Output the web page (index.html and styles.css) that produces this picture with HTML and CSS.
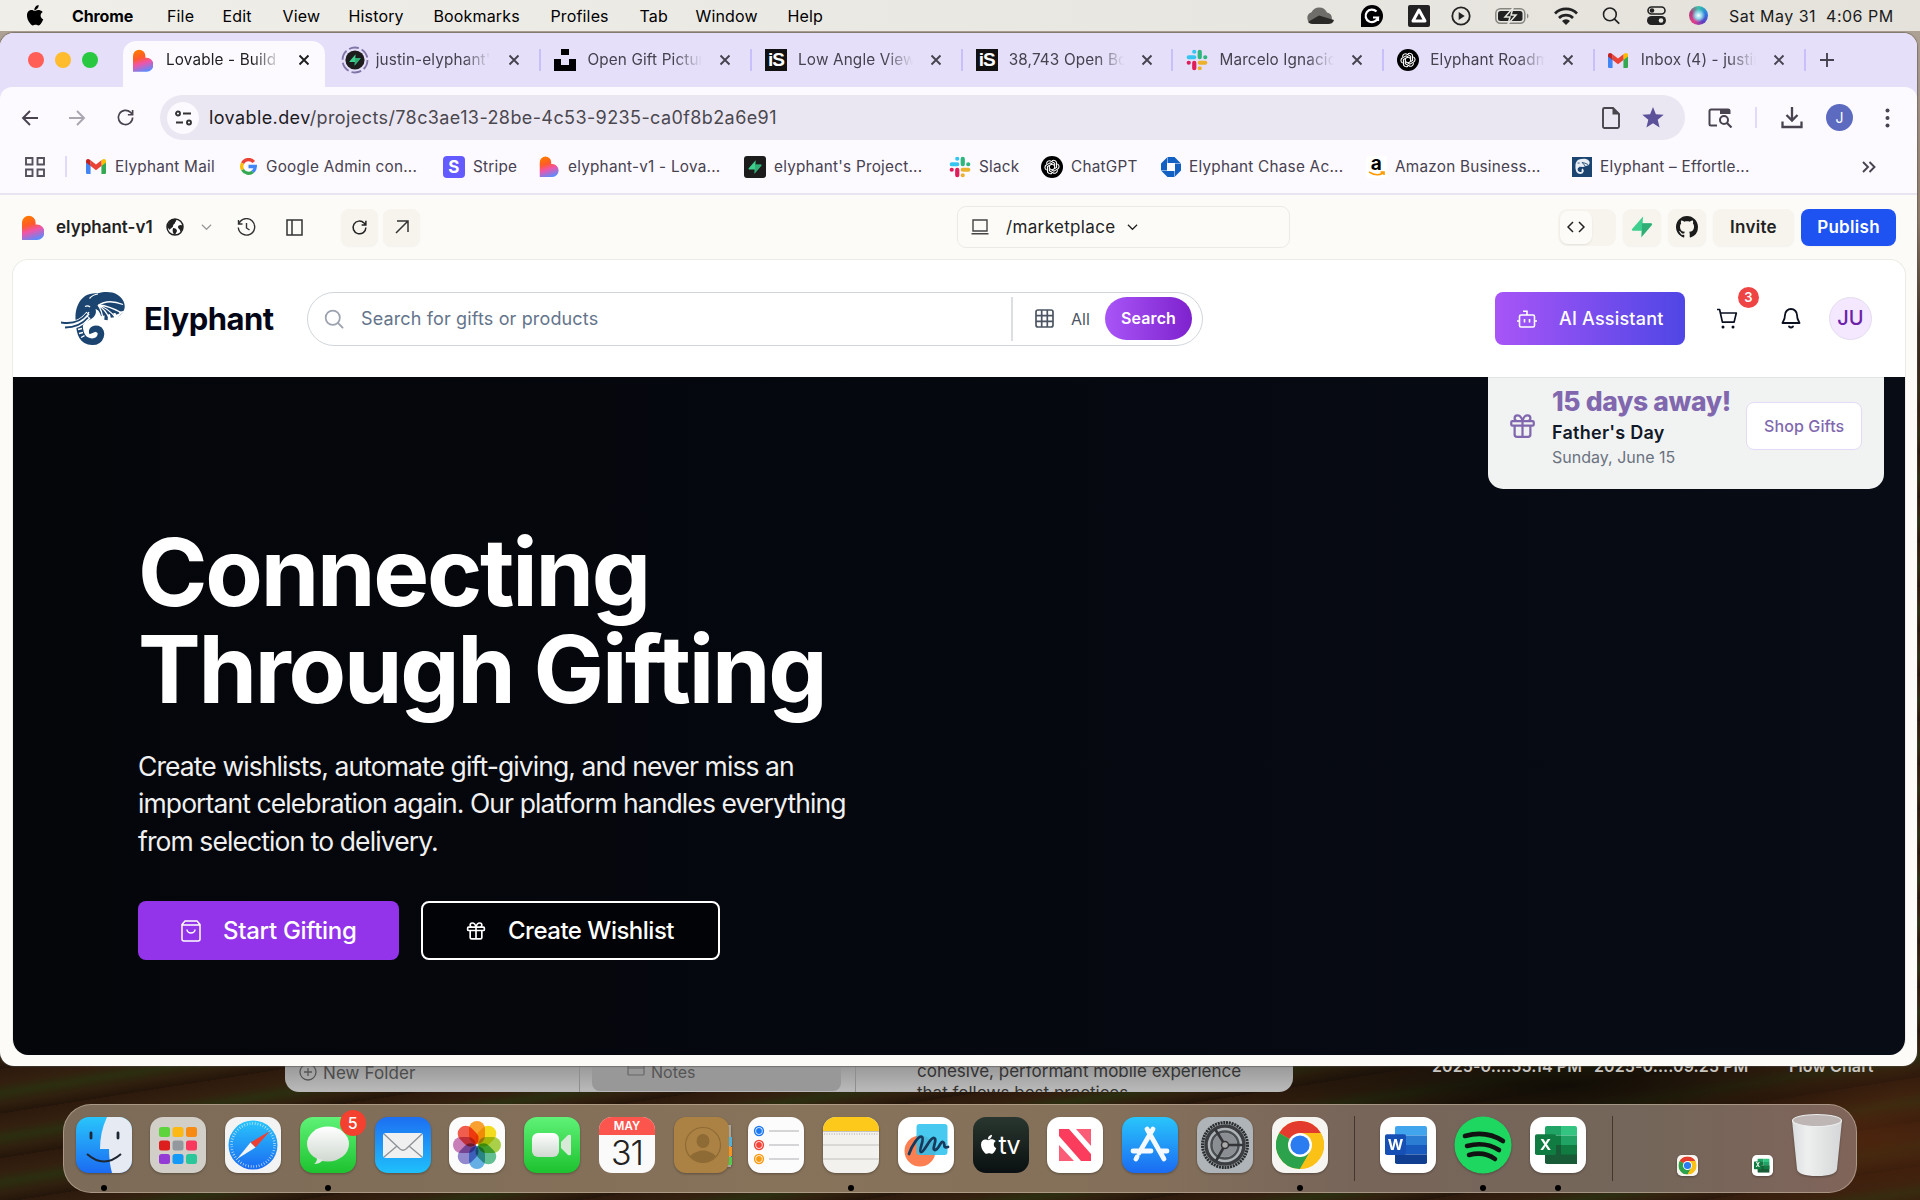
FILE: index.html
```html
<!DOCTYPE html>
<html lang="en">
<head>
<meta charset="utf-8">
<title>Elyphant – Marketplace</title>
<link rel="stylesheet" href="styles.css">
</head>
<body>
<svg class="defs" width="0" height="0" aria-hidden="true">
  <defs>
    <linearGradient id="gLov" x1=".3" y1="0" x2=".6" y2="1"><stop offset="0" stop-color="#ff7a00"/><stop offset=".35" stop-color="#ff5a2a"/><stop offset=".6" stop-color="#f055a8"/><stop offset="1" stop-color="#5a8bff"/></linearGradient>
    <linearGradient id="gBlue" x1="0" y1="0" x2="0" y2="1"><stop offset="0" stop-color="#29c5fb"/><stop offset="1" stop-color="#1b6bf2"/></linearGradient>
    <linearGradient id="gMail" x1="0" y1="0" x2="0" y2="1"><stop offset="0" stop-color="#1d6ff2"/><stop offset="1" stop-color="#1fc0fb"/></linearGradient>
    <linearGradient id="gGreen" x1="0" y1="0" x2="0" y2="1"><stop offset="0" stop-color="#5ff277"/><stop offset="1" stop-color="#1dc22f"/></linearGradient>
    <linearGradient id="gWhite" x1="0" y1="0" x2="0" y2="1"><stop offset="0" stop-color="#fff"/><stop offset="1" stop-color="#cfd8d0"/></linearGradient>
    <linearGradient id="gTrash" x1="0" y1="0" x2="1" y2="0"><stop offset="0" stop-color="#d9dcdd"/><stop offset=".3" stop-color="#eef0f0"/><stop offset="1" stop-color="#d4d6d7"/></linearGradient>
    <symbol id="lovable" viewBox="0 0 22 25"><path d="M0 25V7.500a6.800 6.800 0 0 1 13.600 0V9.500H15a7.400 7.700 0 0 1 0 15.500Z" fill="url(#gLov)"/></symbol>
    <symbol id="gmail" viewBox="0 0 24 18"><path d="M0 2v14.500A1.500 1.500 0 0 0 1.500 18H5.500V7Z" fill="#4285f4"/><path d="M18.500 7v11h4a1.500 1.500 0 0 0 1.500-1.500V2Z" fill="#34a853"/><path d="M18.500 1.600V8.500L24 4.300V2.400C24 .2 21.500-.7 19.800.6Z" fill="#fbbc04"/><path d="M5.500 8.500V1.600L12 6.500 18.500 1.600V8.500L12 13.400Z" fill="#ea4335"/><path d="M0 2.400v1.900l5.500 4.200V1.600L4.200.6C2.500-.7 0 .2 0 2.400Z" fill="#c5221f"/></symbol>
    <symbol id="slack" viewBox="0 0 24 24"><g stroke-width="4.600" stroke-linecap="round"><path d="M9 3v0M9 9H3" stroke="#36c5f0"/><path d="M21 9v0M15 3v6" stroke="#2eb67d"/><path d="M15 21v0M15 15h6" stroke="#ecb22e"/><path d="M3 15v0M9 15v6" stroke="#e01e5a"/></g></symbol>
    <symbol id="gpt" viewBox="0 0 24 24"><circle cx="12" cy="12" r="12" fill="#000"/><g fill="none" stroke="#fff" stroke-width="1.200"><path id="pet" d="M12 5.200a3.200 3.200 0 0 1 5 2.800v4.500L12 15.300"/><use href="#pet" transform="rotate(60 12 12)"/><use href="#pet" transform="rotate(120 12 12)"/><use href="#pet" transform="rotate(180 12 12)"/><use href="#pet" transform="rotate(240 12 12)"/><use href="#pet" transform="rotate(300 12 12)"/></g></symbol>
    <symbol id="bolt" viewBox="0 0 24 24"><path d="M13.200.6 1.200 14.300c-.7.9-.1 1.900 1 1.900H12Z" fill="#3ecf8e"/><path d="M11 23.400 22.800 9.700c.7-.9.100-1.900-1-1.900H12Z" fill="#3ecf8e"/><path d="M12 16.200v6.200l10.600-12.700c.6-.9.100-1.900-1-1.900H12Z" fill="#249361" opacity=".55"/></symbol>
    <symbol id="close" viewBox="0 0 12 12"><path d="m1.500 1.500 9 9m0-9-9 9" stroke="currentColor" stroke-width="1.900" fill="none"/></symbol>
    <symbol id="chev" viewBox="0 0 12 8"><path d="m1 1.500 5 5 5-5" stroke="currentColor" stroke-width="1.300" fill="none"/></symbol>
    <symbol id="reload" viewBox="0 0 24 24"><path d="M21 12a9 9 0 1 1-2.600-6.400L21 8.200M21 2.500v6h-6" fill="none" stroke="currentColor" stroke-width="2.100"/></symbol>
    <symbol id="lens" viewBox="0 0 24 24"><circle cx="10.500" cy="10.500" r="8.500" fill="none" stroke="currentColor" stroke-width="2.100"/><path d="m16.700 16.700 5.600 5.600" stroke="currentColor" stroke-width="2.300" stroke-linecap="round"/></symbol>
    <symbol id="gift" viewBox="0 0 24 24"><path d="M3 8h18a1 1 0 0 1 1 1v2a1 1 0 0 1-1 1H3a1 1 0 0 1-1-1V9a1 1 0 0 1 1-1ZM12 8v14M19 12v8a2 2 0 0 1-2 2H7a2 2 0 0 1-2-2v-8M7.500 8a2.500 2.500 0 0 1 0-5C11 3 12 8 12 8s1-5 4.500-5a2.500 2.500 0 0 1 0 5" fill="none" stroke="currentColor" stroke-width="2" stroke-linejoin="round"/></symbol>
    <symbol id="apple" viewBox="0 0 18 22"><path d="M12.300 0c.2 1.400-.4 2.700-1.200 3.700-.8 1-2 1.700-3.300 1.600-.2-1.300.5-2.700 1.200-3.500C9.800.800 11.200.100 12.300 0ZM16.600 7.400c-1.400.8-2.200 2-2.200 3.700 0 1.900 1.100 3.400 2.800 4-.5 1.600-1.400 3.200-2.500 4.600-.7.900-1.500 1.800-2.700 1.800-1.100 0-1.500-.7-2.900-.7s-1.900.7-2.900.7c-1.200 0-2-.9-2.800-2C1 16.700 0 13.600 0 11 0 7.200 2.500 5.300 4.900 5.300c1.300 0 2.400.8 3.200.8.800 0 2-.9 3.600-.9 1.700 0 3.600.6 4.900 2.200Z" fill="currentColor"/></symbol>
    <symbol id="chrome" viewBox="0 0 48 48"><circle cx="24" cy="24" r="24" fill="#fbc116"/><path d="M24 24 3.200 12A24 24 0 0 1 44.800 12Z" fill="#e33b2e"/><path d="M24 24 3.200 12A24 24 0 0 0 24 48l10.400-18Z" fill="#2da24c"/><path d="M24 12h20.800A24 24 0 0 1 24 48l10.400-18Z" fill="#fbc116"/><circle cx="24" cy="24" r="12" fill="#fff"/><circle cx="24" cy="24" r="9.600" fill="#2a7cf0"/></symbol>
    <symbol id="elephant" viewBox="0 0 64 54">
      <path d="M14.500 27C14 18 17 9 24 4 28 1.300 33 .8 37 1.300 43-.5 51-.5 56 2.500c6 3.500 8.500 9 7.500 14-.6 3-3 6-6.500 8.200L41 28.500C40 22 38 18 34.500 17c1.500 4-1 8.500-5.500 10.500-3 1.500-7 5-8 7h-5Z" fill="#1b4470"/>
      <path d="M64 18.500 57 25 41 30.500l-2-6Z" fill="#fff"/>
      <path d="M43 14q3 6 2 14M44.500 13q6 5 7 12.500M46 12q8 4 11 10" fill="none" stroke="#1b4470" stroke-width="3.400"/>
      <path d="M37 13.500Q47 6.500 62 12.500M38 13q10 1 22 7.500M37 13q10 3 17.500 12.500M37 13q8 5 11.500 14M37 13q4 5 5 15" fill="none" stroke="#fff" stroke-width="1.300"/>
      <path d="M37 2q-5 .5-8.500 4.500M24 14.500q3-1.500 5 .5M21 25q5-1 7-5" fill="none" stroke="#fff" stroke-width="1.200"/>
      <path d="M18.500 30C18 42 22 49.500 31 49.700c9 .200 12-10.500 5.500-12.700-4-1-6 1.500-5 4" fill="none" stroke="#1b4470" stroke-width="6.600"/>
      <path d="M0 31c12 1.500 20-1 27-10M4 36c10-.5 17-3 24-11" fill="none" stroke="#fff" stroke-width="4.200"/>
      <path d="M0 30.500c12 2 20-1 26-9M4 35.500c10 0 17-3 23-10" fill="none" stroke="#1b4470" stroke-width="1.900"/>
      <path d="m17 37.500 4-1M18 41.500l4-1M20 45.500l3.500-1.800" stroke="#fff" stroke-width="1.300"/>
    </symbol>
    <symbol id="word" viewBox="0 0 42 46" preserveAspectRatio="none"><path d="M12 0h28a2 2 0 0 1 2 2v9.500H10V2a2 2 0 0 1 2-2Z" fill="#41a5ee"/><path d="M10 11.500h32V23H10z" fill="#2b7cd3"/><path d="M10 23h32v11.500H10z" fill="#185abd"/><path d="M10 34.500h32V44a2 2 0 0 1-2 2H12a2 2 0 0 1-2-2Z" fill="#103f91"/><rect y="10" width="21" height="25" rx="2" fill="#1650b5"/></symbol>
    <symbol id="excel" viewBox="0 0 42 46" preserveAspectRatio="none"><path d="M12 0h14v11.500H10V2a2 2 0 0 1 2-2Z" fill="#21a366"/><path d="M26 0h14a2 2 0 0 1 2 2v9.500H26z" fill="#33c481"/><path d="M10 11.500h16V23H10z" fill="#107c41"/><path d="M26 11.500h16V23H26z" fill="#21a366"/><path d="M10 23h32v23H12a2 2 0 0 1-2-2z" fill="#185c37"/><path d="M26 23h16v11.500H26z" fill="#107c41"/><rect y="10" width="21" height="25" rx="2" fill="#107c41"/></symbol>
  </defs>
</svg>

<header class="menubar">
  <svg width="17" height="21"><use href="#apple"/></svg>
  <b>Chrome</b><span>File</span><span>Edit</span><span>View</span><span>History</span><span>Bookmarks</span><span>Profiles</span><span>Tab</span><span>Window</span><span>Help</span>
  <div class="status">
    <svg width="28" height="18" viewBox="0 0 28 18"><path d="M7 17a6 6 0 0 1-1.500-11.700A8.500 8.500 0 0 1 21 5.500 6 6 0 0 1 22 17Z" fill="#6f6d69"/><path d="M2 15 13 8.500 28 13c-1 3-3 4-6 4H7c-2 0-4-1-5-2Z" fill="#2b2a28"/></svg>
    <svg width="22" height="22" viewBox="0 0 22 22"><path d="M0 22V11a11 11 0 1 1 11 11Z" fill="#000"/><path d="M15.500 6.500a6.300 6.300 0 1 0 1.500 6h-5M17 12v4" fill="none" stroke="#fff" stroke-width="2.200"/></svg>
    <svg width="22" height="22" viewBox="0 0 22 22"><rect width="22" height="22" rx="2" fill="#222"/><path d="m11 5 6 11H5Z" fill="none" stroke="#fff" stroke-width="3" stroke-linejoin="round"/></svg>
    <svg width="20" height="20" viewBox="0 0 20 20"><circle cx="10" cy="10" r="8.700" fill="none" stroke="#222" stroke-width="1.800"/><path d="m7.700 6 6 4-6 4Z" fill="#222"/></svg>
    <svg width="34" height="18" viewBox="0 0 34 18"><rect x=".8" y="1.800" width="29" height="14.500" rx="4.500" fill="none" stroke="#888680" stroke-width="1.500"/><rect x="3" y="4" width="24.500" height="10" rx="2.500" fill="#222"/><path d="M32 6.500c2 1 2 4 0 5" fill="#888680"/><path d="m18 1-8 9h5l-2 7 8-9h-5Z" fill="#222" stroke="#e8e7e1" stroke-width="1.500"/></svg>
    <svg width="24" height="18" viewBox="0 0 24 18"><g fill="none" stroke="#222" stroke-width="2.700"><path d="M1 6.500a15.500 15.500 0 0 1 22 0"/><path d="M5 11a10 10 0 0 1 14 0"/></g><path d="M8 14a5.500 5.500 0 0 1 8 0l-4 4Z" fill="#222"/></svg>
    <svg class="dark" width="18" height="19"><use href="#lens"/></svg>
    <svg width="19" height="19" viewBox="0 0 19 19"><rect x="1" y="1" width="17" height="7" rx="3.500" fill="none" stroke="#222" stroke-width="1.600"/><circle cx="5" cy="4.500" r="2.300" fill="#222"/><rect y="10" width="19" height="9" rx="4.500" fill="#222"/><circle cx="14" cy="14.500" r="2.300" fill="#e8e7e1"/></svg>
    <i class="siri"></i>
    <span class="clock">Sat May 31&nbsp; 4:06 PM</span>
  </div>
</header>

<section class="notes">
  <div class="notes-side"><svg width="18" height="18" viewBox="0 0 18 18"><circle cx="9" cy="9" r="8" fill="none" stroke="#555" stroke-width="1.300"/><path d="M9 5v8M5 9h8" stroke="#555" stroke-width="1.300"/></svg>New Folder</div>
  <div class="notes-list"><div class="notes-sel"><svg width="18" height="14" viewBox="0 0 18 14"><path d="M1 12V2q0-1 1-1h4l1.500 2H16q1 0 1 1v8q0 1-1 1H2q-1 0-1-1ZM1 6h16" fill="none" stroke="#666" stroke-width="1.200"/></svg>Notes</div></div>
  <p class="notes-text">cohesive, performant mobile experience<br>that follows best practices.</p>
</section>
<div class="desk-labels"><span>2025-0....55.14 PM</span><span>2025-0....09.25 PM</span><span>Flow Chart</span></div>

<main class="window">
  <div class="tabs">
    <div class="lights"><i></i><i></i><i></i></div>
    <div class="tab active"><svg width="20" height="25"><use href="#lovable"/></svg><span class="title">Lovable - Build your app</span><svg class="x" width="12" height="12"><use href="#close"/></svg></div>
    <div class="tab"><svg class="ring" width="28" height="28" viewBox="0 0 28 28"><circle cx="14" cy="14" r="12.500" fill="none" stroke="#7f75a6" stroke-width="1.800" stroke-dasharray="10 3.100"/><circle cx="14" cy="14" r="9.600" fill="#1c1c1c"/><use href="#bolt" x="8" y="8" width="12" height="12"/></svg><span class="title">justin-elyphant's Org</span><svg class="x" width="12" height="12"><use href="#close"/></svg></div>
    <div class="tab"><svg width="22" height="22" viewBox="0 0 22 22"><path d="M7 0h8v6H7zM0 10h7v6h8v-6h7v12H0z"/></svg><span class="title">Open Gift Pictures</span><svg class="x" width="12" height="12"><use href="#close"/></svg></div>
    <div class="tab"><b class="is">iS</b><span class="title">Low Angle View Of</span><svg class="x" width="12" height="12"><use href="#close"/></svg></div>
    <div class="tab"><b class="is">iS</b><span class="title">38,743 Open Box Gift</span><svg class="x" width="12" height="12"><use href="#close"/></svg></div>
    <div class="tab"><svg width="22" height="22"><use href="#slack"/></svg><span class="title">Marcelo Ignacio (DM)</span><svg class="x" width="12" height="12"><use href="#close"/></svg></div>
    <div class="tab"><svg width="22" height="22"><use href="#gpt"/></svg><span class="title">Elyphant Roadmap</span><svg class="x" width="12" height="12"><use href="#close"/></svg></div>
    <div class="tab"><svg width="20" height="15"><use href="#gmail"/></svg><span class="title mail">Inbox (4) - justin@ely</span><svg class="x" width="12" height="12"><use href="#close"/></svg></div>
    <svg class="plus" width="14" height="14" viewBox="0 0 14 14"><path d="M7 0v14M0 7h14" stroke="#46424f" stroke-width="1.900"/></svg>
  </div>

  <div class="toolbar">
    <svg width="17" height="16" viewBox="0 0 17 16"><path d="M17 8H2M9 1 2 8l7 7" fill="none" stroke="#48434f" stroke-width="1.900"/></svg>
    <svg width="17" height="16" viewBox="0 0 17 16"><path d="M0 8h15M8 1l7 7-7 7" fill="none" stroke="#a9a6b0" stroke-width="1.900"/></svg>
    <svg class="ink" width="19" height="19"><use href="#reload"/></svg>
    <div class="omnibox">
      <span class="site"><svg width="17" height="16" viewBox="0 0 17 16" fill="none" stroke="#333" stroke-width="1.900"><circle cx="3" cy="3.500" r="2"/><path d="M8 3.500h8M1 12.500h7"/><circle cx="14" cy="12.500" r="2"/></svg></span>
      <span class="url"><em>lovable.dev</em>/projects/78c3ae13-28be-4c53-9235-ca0f8b2a6e91</span>
      <svg width="18" height="22" viewBox="0 0 18 22"><path d="M2.500 1H11l6 6v12.500a1.500 1.500 0 0 1-1.500 1.500h-13A1.500 1.500 0 0 1 1 19.500v-17A1.500 1.500 0 0 1 2.500 1Z" fill="none" stroke="#47464c" stroke-width="1.900"/><path d="M10.500 1 17 7.500h-6.500Z" fill="#47464c"/></svg>
      <svg width="22" height="21" viewBox="0 0 22 21"><path d="m11 0 2.900 7.200 7.800.6-6 5 1.900 7.600-6.600-4.100-6.600 4.100 1.900-7.600-6-5 7.800-.6Z" fill="#5b5299"/></svg>
    </div>
    <div class="tools">
      <svg width="25" height="20" viewBox="0 0 25 20"><path d="M9 17.500H3A1.500 1.500 0 0 1 1.500 16V3A1.500 1.500 0 0 1 3 1.500h17A1.500 1.500 0 0 1 21.500 3v3" fill="none" stroke="#48434f" stroke-width="2"/><path d="M12 1h9.500v5H12z" fill="#48434f"/><circle cx="16" cy="12" r="4" fill="none" stroke="#48434f" stroke-width="2"/><path d="m19 15 4.500 4.500" stroke="#48434f" stroke-width="2.200"/></svg>
      <i class="vsep"></i>
      <svg width="22" height="22" viewBox="0 0 22 22"><path d="M11 0v13M5.500 8l5.500 5.500L16.500 8M1.500 14.500V20h19v-5.500" fill="none" stroke="#48434f" stroke-width="2.300"/></svg>
      <span class="me">J</span>
      <svg width="5" height="20" viewBox="0 0 5 20" fill="#48434f"><circle cx="2.500" cy="2.500" r="2"/><circle cx="2.500" cy="10" r="2"/><circle cx="2.500" cy="17.500" r="2"/></svg>
    </div>
  </div>

  <nav class="bookmarks">
    <svg width="20" height="20" viewBox="0 0 20 20"><path d="M1 1h6.500v6.500H1zM12.500 1H19v6.500h-6.500zM1 12.500h6.500V19H1zM12.500 12.500H19V19h-6.500z" fill="none" stroke="#55515d" stroke-width="1.900"/></svg>
    <i class="vsep"></i>
    <a><svg width="20" height="15"><use href="#gmail"/></svg><span>Elyphant Mail</span></a>
    <a><svg width="17" height="17" viewBox="0 0 18 18" fill="none" stroke-width="3.500"><path d="M14.600 4.200A7.200 7.200 0 0 0 2.700 5.500" stroke="#ea4335"/><path d="M2.700 5.500a7.300 7.300 0 0 0 0 7" stroke="#fbbc04"/><path d="M2.700 12.500a7.200 7.200 0 0 0 10.900 2" stroke="#34a853"/><path d="M13.500 14.600A7 7 0 0 0 16.200 9H9" stroke="#4285f4"/></svg><span>Google Admin con...</span></a>
    <a class="tight"><b class="stripe">S</b><span>Stripe</span></a>
    <a><svg width="20" height="21"><use href="#lovable"/></svg><span>elyphant-v1 - Lova...</span></a>
    <a class="tight"><i class="supa"><svg width="14" height="14"><use href="#bolt"/></svg></i><span>elyphant's Project...</span></a>
    <a class="tight"><svg width="22" height="22"><use href="#slack"/></svg><span>Slack</span></a>
    <a class="tight"><svg width="22" height="22"><use href="#gpt"/></svg><span>ChatGPT</span></a>
    <a class="tight"><svg width="20" height="20" viewBox="0 0 20 20"><path d="M6.500 0h7l6 6H6.500zM20 6.500v7l-6 6V6.500zM13.500 20h-7l-6-6h13zM0 13.500v-7l6-6v13z" fill="#1260c2"/></svg><span>Elyphant Chase Ac...</span></a>
    <a class="tight"><b class="amazon">a<svg width="18" height="6" viewBox="0 0 18 6"><path d="M1 1q8 5 14 1M12.500 1H16v3" fill="none" stroke="#f90" stroke-width="1.600"/></svg></b><span>Amazon Business...</span></a>
    <a class="tight"><i class="ely"><svg width="15" height="17" viewBox="13 0 52 54"><path d="M14.500 27C14 18 17 9 24 4 35-1 50-1 56 2.500c8 4 10 13 5 19L41 28.500 29 27.500l-8 7h-5Z" fill="#e9eff5"/><path d="M18.500 30C18 42 22 49.500 31 49.700c9 .200 12-10.500 5.500-12.700" fill="none" stroke="#e9eff5" stroke-width="7"/><path d="M37 13q10 1 22 7.500M37 13q8 5 11.500 14M22 15h7" stroke="#1b4470" stroke-width="3" fill="none"/></svg></i><span>Elyphant – Effortle...</span></a>
    <svg width="14" height="12" viewBox="0 0 14 12"><path d="m1 1 5 5-5 5M7.500 1l5 5-5 5" fill="none" stroke="#48434f" stroke-width="1.900"/></svg>
  </nav>

  <div class="builder">
    <div class="project">
      <svg width="22" height="25"><use href="#lovable"/></svg>
      <b>elyphant-v1</b>
      <svg width="18" height="18" viewBox="0 0 18 18"><circle cx="9" cy="9" r="8" fill="#fff" stroke="#222" stroke-width="1.500"/><path d="M3 4c2-3 5-3 7-3 1 2-1 3-1 4s-2 1-2 3-3 2-3 4L1 9ZM17 8c-2-2-5-1-5 1s3 2 2 5c2-1 3-3 3-6ZM7 10c2 0 4 1 4 3l-2 4c-2-1-3-4-2-7Z" fill="#222"/></svg>
      <svg class="grey" width="11" height="8"><use href="#chev"/></svg>
      <svg width="19" height="19" viewBox="0 0 19 19" fill="none" stroke="#333" stroke-width="1.400"><path d="M2 5.500A8.200 8.200 0 1 1 1.300 9.500M1.500 2v4h4M9.500 5v5l3 2"/></svg>
      <svg width="17" height="17" viewBox="0 0 17 17" fill="none" stroke="#333" stroke-width="1.500"><path d="M1 1h15v15H1zM6 1v15"/></svg>
    </div>
    <div class="pair"><span class="btn"><svg width="17" height="17"><use href="#reload"/></svg></span><span class="btn"><svg width="14" height="14" viewBox="0 0 14 14"><path d="M1 13 13 1M2 1h11v11" fill="none" stroke="#333" stroke-width="1.500"/></svg></span></div>
    <div class="route"><svg width="18" height="16" viewBox="0 0 18 16"><path d="M2 1h14v11H2zM.5 14.800h17" fill="none" stroke="#444" stroke-width="1.400"/></svg><span>/marketplace</span><svg width="11" height="8"><use href="#chev"/></svg></div>
    <div class="actions">
      <span class="toggle"><i><svg width="18" height="12" viewBox="0 0 18 12"><path d="M6 1 1 6l5 5M12 1l5 5-5 5" fill="none" stroke="#222" stroke-width="1.500"/></svg></i></span>
      <span class="btn"><svg width="22" height="22"><use href="#bolt"/></svg></span>
      <span class="btn"><svg width="22" height="22" viewBox="0 0 16 16"><path fill="#1b1b1b" d="M8 0C3.580 0 0 3.580 0 8c0 3.540 2.290 6.530 5.470 7.590.4.070.55-.17.55-.38 0-.19-.01-.82-.01-1.490-2.010.37-2.530-.49-2.690-.94-.09-.23-.48-.94-.82-1.130-.28-.15-.68-.52-.01-.53.63-.01 1.080.58 1.230.82.720 1.210 1.870.87 2.330.66.070-.52.280-.87.510-1.070-1.780-.2-3.640-.89-3.640-3.950 0-.87.310-1.590.82-2.150-.08-.2-.36-1.020.08-2.120 0 0 .67-.21 2.200.82.640-.18 1.320-.27 2-.27s1.360.09 2 .27c1.530-1.040 2.200-.82 2.200-.82.440 1.100.160 1.920.080 2.120.510.560.820 1.270.820 2.150 0 3.070-1.870 3.750-3.650 3.950.290.250.540.730.540 1.480 0 1.070-.01 1.930-.01 2.200 0 .210.150.460.550.380A8.010 8.010 0 0 0 16 8c0-4.420-3.580-8-8-8Z"/></svg></span>
      <span class="btn invite">Invite</span><span class="btn publish">Publish</span>
    </div>
  </div>

  <article class="preview">
    <header class="site-head">
      <svg width="64" height="54"><use href="#elephant"/></svg>
      <strong>Elyphant</strong>
      <div class="search">
        <svg class="grey2" width="20" height="20"><use href="#lens"/></svg>
        <span class="ph">Search for gifts or products</span>
        <i></i>
        <svg width="19" height="19" viewBox="0 0 19 19" fill="none" stroke="#4b5563" stroke-width="1.700"><rect x="1" y="1" width="17" height="17" rx="2"/><path d="M1 6.700h17M1 12.300h17M6.700 1v17M12.300 1v17"/></svg>
        <span class="all">All</span>
        <span class="go">Search</span>
      </div>
      <div class="ai"><svg width="20" height="18" viewBox="0 0 20 18"><path d="M10 5V1.200H6M4 5h12a1.500 1.500 0 0 1 1.500 1.500v9A1.500 1.500 0 0 1 16 17H4a1.500 1.500 0 0 1-1.500-1.500v-9A1.500 1.500 0 0 1 4 5ZM0 11h2.500M17.500 11H20M7.500 9v3.500M12.500 9v3.500" fill="none" stroke="#fff" stroke-width="1.600"/></svg>AI Assistant</div>
      <div class="cart"><svg width="22" height="22" viewBox="0 0 22 22"><path d="M1 1.500h2.600l2.800 12.600h11.700L20.300 5H4.500" fill="none" stroke="#0b1020" stroke-width="1.700" stroke-linejoin="round"/><circle cx="7" cy="19" r="1.500" fill="#0b1020"/><circle cx="17" cy="19" r="1.500" fill="#0b1020"/></svg><span>3</span></div>
      <svg class="bell" width="20" height="21" viewBox="0 0 20 21"><path d="M4 7a6 6 0 0 1 12 0c0 5 2.500 7 2.500 8h-17C1.500 14 4 12 4 7ZM8 18.500q2 2 4 0" fill="none" stroke="#0b1020" stroke-width="1.800" stroke-linejoin="round" stroke-linecap="round"/></svg>
      <span class="avatar">JU</span>
    </header>
    <section class="hero">
      <div class="copy">
        <h1>Connecting<br>Through Gifting</h1>
        <p>Create wishlists, automate gift-giving, and never miss an<br>important celebration again. Our platform handles everything<br>from selection to delivery.</p>
        <div class="cta">
          <span class="primary"><svg width="20" height="22" viewBox="0 0 20 22"><path d="M4 1h12l3 3.500V19a2 2 0 0 1-2 2H3a2 2 0 0 1-2-2V4.500ZM1 5h18M6 9.500a4 3.500 0 0 0 8 0" fill="none" stroke="#fff" stroke-width="1.500" stroke-linejoin="round"/></svg>Start Gifting</span>
          <span class="ghost"><svg width="20" height="21"><use href="#gift"/></svg>Create Wishlist</span>
        </div>
      </div>
      <aside class="event">
        <svg width="27" height="27"><use href="#gift"/></svg>
        <div><strong>15 days away!</strong><b>Father's Day</b><small>Sunday, June 15</small></div>
        <span>Shop Gifts</span>
      </aside>
    </section>
  </article>
</main>

<footer class="dock">
  <div class="cell run"><svg viewBox="0 0 56 56"><rect width="56" height="56" rx="13" fill="url(#gBlue)"/><path d="M31 0q-7 15-7 32h9q0 13 3 24h7a13 13 0 0 0 13-13V13A13 13 0 0 0 43 0Z" fill="#e6ebf3"/><path d="M15 16v5M42 16v5" stroke="#1d2733" stroke-width="2.800" stroke-linecap="round"/><path d="M11 37q17 15 34 0" fill="none" stroke="#1d2733" stroke-width="2"/></svg></div>
  <div class="cell"><svg viewBox="0 0 56 56"><rect width="56" height="56" rx="13" fill="#d2cec8"/><g><rect x="9" y="10" width="11" height="10" rx="2.500" fill="#5ed43c"/><rect x="22.500" y="10" width="11" height="10" rx="2.500" fill="#fcb813"/><rect x="36" y="10" width="11" height="10" rx="2.500" fill="#f68a12"/><rect x="9" y="23.500" width="11" height="10" rx="2.500" fill="#dc1f1e"/><rect x="22.500" y="23.500" width="11" height="10" rx="2.500" fill="#93989e"/><rect x="36" y="23.500" width="11" height="10" rx="2.500" fill="#f9385e"/><rect x="9" y="37" width="11" height="10" rx="2.500" fill="#943bd5"/><rect x="22.500" y="37" width="11" height="10" rx="2.500" fill="#1499f6"/><rect x="36" y="37" width="11" height="10" rx="2.500" fill="#2bc79a"/></g></svg></div>
  <div class="cell"><svg viewBox="0 0 56 56"><rect width="56" height="56" rx="13" fill="#f3f3f3"/><circle cx="28" cy="28" r="24.500" fill="url(#gBlue)"/><circle cx="28" cy="28" r="21.500" fill="none" stroke="#c9e7fb" stroke-width="2.600" stroke-dasharray=".7 2"/><path d="M45 14 25.500 25.500l5 5Z" fill="#ec4034"/><path d="m12 42 13.500-16.500 5 5Z" fill="#f4f4f4"/></svg></div>
  <div class="cell run"><svg viewBox="0 0 56 56"><rect width="56" height="56" rx="13" fill="url(#gGreen)"/><ellipse cx="28" cy="27" rx="21" ry="17.500" fill="url(#gWhite)"/><path d="M17 41q0 4-3 6 6 0 9-4Z" fill="#dce9dd"/></svg><em>5</em></div>
  <div class="cell"><svg viewBox="0 0 56 56"><rect width="56" height="56" rx="13" fill="url(#gMail)"/><rect x="8" y="16" width="40" height="25" rx="3" fill="#f0f0f0"/><path d="m9 17 16 15q3 2.500 6 0l16-15M9 40l13-11M47 40 34 29" fill="none" stroke="#8e9296" stroke-width="1.300"/></svg></div>
  <div class="cell"><svg viewBox="0 0 56 56"><rect width="56" height="56" rx="13" fill="#fcfcfc"/><g class="petals"><rect x="20" y="4" width="16" height="23" rx="8" fill="#fb9a1e"/><rect x="20" y="4" width="16" height="23" rx="8" fill="#f6dc0c" transform="rotate(45 28 28)"/><rect x="20" y="4" width="16" height="23" rx="8" fill="#a5cf3a" transform="rotate(90 28 28)"/><rect x="20" y="4" width="16" height="23" rx="8" fill="#56bd8a" transform="rotate(135 28 28)"/><rect x="20" y="4" width="16" height="23" rx="8" fill="#5aabe6" transform="rotate(180 28 28)"/><rect x="20" y="4" width="16" height="23" rx="8" fill="#8b80cc" transform="rotate(225 28 28)"/><rect x="20" y="4" width="16" height="23" rx="8" fill="#c774b2" transform="rotate(270 28 28)"/><rect x="20" y="4" width="16" height="23" rx="8" fill="#f4503e" transform="rotate(315 28 28)"/></g></svg></div>
  <div class="cell"><svg viewBox="0 0 56 56"><rect width="56" height="56" rx="13" fill="url(#gGreen)"/><rect x="8" y="16" width="27" height="24" rx="6" fill="url(#gWhite)"/><path d="m37 25 7-7q3-1 3 1v18q0 2-3 1l-7-7Z" fill="#d7ead8"/></svg></div>
  <div class="cell"><div class="cal"><span>MAY</span><b>31</b></div></div>
  <div class="cell"><svg viewBox="0 0 56 56"><path d="M50 8h7v42h-7z" fill="#a7a49e"/><path d="M50 20h8v9h-8z" fill="#4fb2dc"/><path d="M50 30h8v9h-8z" fill="#f6941d"/><path d="M50 40h8v8h-8z" fill="#51c94e"/><rect width="55" height="56" rx="12" fill="#ab8244"/><circle cx="29" cy="28" r="17.500" fill="none" stroke="#8e6a34" stroke-width="1.200"/><ellipse cx="29" cy="24" rx="6.500" ry="7" fill="#8e6a34"/><path d="M16 39q13-11 26 0-13 13-26 0Z" fill="#8e6a34"/></svg></div>
  <div class="cell"><svg viewBox="0 0 56 56"><rect width="56" height="56" rx="13" fill="#fcfcfc"/><g stroke="#c8c8cb" stroke-width="1.300"><path d="M21 14h30M21 28h30M21 42h30"/></g><g fill="none" stroke-width="1.500"><circle cx="11" cy="14" r="4.400" stroke="#1c79f3"/><circle cx="11" cy="28" r="4.400" stroke="#f4443a"/><circle cx="11" cy="42" r="4.400" stroke="#f89c14"/></g><circle cx="11" cy="14" r="2.900" fill="#1c79f3"/><circle cx="11" cy="28" r="2.900" fill="#f4443a"/><circle cx="11" cy="42" r="2.900" fill="#f89c14"/></svg></div>
  <div class="cell run"><svg viewBox="0 0 56 56"><rect width="56" height="56" rx="13" fill="#f2f1ee"/><path d="M0 14v-1A13 13 0 0 1 13 0h30a13 13 0 0 1 13 13v1Z" fill="#fdca1c"/><path d="M0 14.500h56M0 28h56M0 42h56" stroke="#bdbbb7" stroke-width=".9"/><path d="M1 17h54" stroke="#999" stroke-dasharray="1 1.500" stroke-width=".8"/></svg></div>
  <div class="cell"><svg viewBox="0 0 56 56"><rect width="56" height="56" rx="13" fill="#fff"/><circle cx="22" cy="34" r="15.500" fill="#fb7f50"/><rect x="18.500" y="7" width="31" height="31" rx="3" fill="#2fc1ed" opacity=".88"/><path d="M11 37C14 28 21 18 24 20s-4 14-1 15 9-15 13-14-3 12 1 12 5-9 8-8-1 7 5 5" fill="none" stroke="#173a5c" stroke-width="2.800" stroke-linecap="round"/></svg></div>
  <div class="cell"><div class="tv"><svg width="16" height="21"><use href="#apple"/></svg>tv</div></div>
  <div class="cell"><svg viewBox="0 0 56 56"><rect width="56" height="56" rx="13" fill="#fff"/><path d="M12 12h10l22 25v7H34L12 19Z" fill="#fb3c5c"/><path d="M29 12h15v17ZM12 28v16h15Z" fill="#fb5c76"/></svg></div>
  <div class="cell"><svg viewBox="0 0 56 56"><rect width="56" height="56" rx="13" fill="url(#gBlue)"/><path d="M25 12 42 42M31 12 17 36M14 42l1-2M11 34h18M38 34h7" stroke="#f4f8ff" stroke-width="4.800" stroke-linecap="round"/></svg></div>
  <div class="cell"><svg viewBox="0 0 56 56"><rect width="56" height="56" rx="13" fill="#aeb4b8"/><g fill="none" stroke="#292b2d"><circle cx="28" cy="28" r="22.500" stroke-width="3" stroke-dasharray="2 .8"/><circle cx="28" cy="28" r="19" stroke-width="3.500" stroke="#3b3d40"/><circle cx="28" cy="28" r="13.500" stroke-width="2.500" stroke="#4c4f52"/></g><circle cx="28" cy="28" r="12" fill="#8b8f93"/><path d="M28 28h18M28 28l-10-16M28 28 19 44" stroke="#333538" stroke-width="2.600"/><circle cx="28" cy="28" r="3.500" fill="#aaa" stroke="#333" stroke-width="1.500"/></svg></div>
  <div class="cell run"><svg viewBox="0 0 56 56"><rect width="56" height="56" rx="13" fill="#f7f5f2"/><use href="#chrome" x="4" y="4" width="48" height="48"/></svg></div>
  <i class="bar"></i>
  <div class="cell"><svg viewBox="0 0 56 56"><rect width="56" height="56" rx="13" fill="#fff"/><use href="#word" x="5" y="9" width="42" height="38"/><text x="15.500" y="33" class="app-letter">W</text></svg></div>
  <div class="cell run"><svg viewBox="0 0 56 56"><circle cx="28" cy="28" r="28.500" fill="#1ed760"/><path d="M10 19q21-6 38 5M12 29q18-5 32 4M14 38q15-4 26 4" fill="none" stroke="#121212" stroke-width="4.600" stroke-linecap="round"/></svg></div>
  <div class="cell run"><svg viewBox="0 0 56 56"><rect width="56" height="56" rx="13" fill="#fff"/><use href="#excel" x="5" y="9" width="42" height="38"/><text x="15.500" y="33" class="app-letter">X</text></svg></div>
  <i class="bar"></i>
  <div class="cell mini"><svg viewBox="0 0 56 56"><rect width="56" height="56" rx="13" fill="#f7f5f2"/><use href="#chrome" x="4" y="4" width="48" height="48"/></svg></div>
  <div class="cell mini"><svg viewBox="0 0 56 56"><rect width="56" height="56" rx="13" fill="#fff"/><use href="#excel" x="5" y="9" width="42" height="38"/><text x="15.500" y="33" class="app-letter">X</text></svg></div>
  <div class="cell trash"><svg viewBox="0 0 50 62"><path d="M0 6h50l-5 49q-1 7-20 7T5 55Z" fill="url(#gTrash)"/><ellipse cx="25" cy="6.500" rx="24.500" ry="6" fill="#bdb6b4" stroke="#eceeee" stroke-width="1.200"/></svg></div>
</footer>
</body>
</html>
```
FILE: styles.css
```css
* { box-sizing: border-box; }
body {
  margin: 0; width: 1920px; height: 1200px; overflow: hidden; position: relative;
  font-family: Inter, "Liberation Sans", sans-serif; font-size: 16px; color: #000;
  background:
    linear-gradient(180deg, #b3a79b 0, #8d7b6c 220px, #3a2c20 330px, transparent 460px),
    radial-gradient(ellipse 340px 60px at 1560px 1085px, rgba(16,13,6,.95), transparent),
    radial-gradient(ellipse 300px 90px at 1860px 1140px, rgba(82,38,14,.8), transparent),
    repeating-linear-gradient(171deg, #2e1a0d 0, #33200f 14px, #2b2e10 24px, #30200e 34px, #24150b 44px);
}
svg { display: block; flex: none; }
i { font-style: normal; }
.defs { position: absolute; }

/* macOS menu bar */
.menubar {
  height: 31px; padding-left: 27px; display: grid; align-items: center;
  grid-template-columns: 45px 95px 55.5px 60px 66px 85px 117px 89px 56px 92px 518.5px 1fr;
  background: linear-gradient(90deg, #efeee9, #e4e2db); white-space: nowrap; letter-spacing: .15px;
}
.menubar b { font-weight: 700; letter-spacing: -.1px; }
.status { display: grid; align-items: center; grid-template-columns: 55px 47px 43px 44px 59px 48px 45px 42px 40px 1fr; }
.dark { color: #222; }
.siri { width: 19px; height: 19px; border-radius: 50%; background: radial-gradient(circle, #fff 0, #8fd6e8 25%, transparent 50%), conic-gradient(#36c3a8, #2c7de0, #5b3fc4, #e0408c, #b33d7c, #36c3a8); }
.clock { color: #1b1b1b; letter-spacing: .5px; }

/* Browser window */
.window { width: 1917px; height: 1033px; margin-top: 2px; position: relative; border-radius: 14px; overflow: hidden; background: #fcfbf8; box-shadow: 0 0 1px 1px rgba(80,75,70,.5); display: flex; flex-direction: column; }
.tabs { height: 54px; flex: none; display: flex; background: #e5dff9; padding: 8px 0 0; box-shadow: 0 12px 0 #e5dff9; }
.lights { width: 123px; padding: 11px 0 0 28px; display: flex; gap: 11px; }
.lights i { width: 16px; height: 16px; border-radius: 50%; background: #ff5f57; }
.lights i:nth-child(2) { background: #febc2e; }
.lights i:nth-child(3) { background: #28c840; }
.tab { width: 210.700px; flex: none; height: 38px; padding-left: 10px; display: flex; align-items: center; position: relative; color: #47424f; }
.tab > :first-child { margin-right: 11px; }
.tab::after { content: ""; position: absolute; right: 3px; top: 8px; width: 2px; height: 22px; background: #c9bffb; }
.tab.active::after { display: none; }
.tab.active::before { content: ""; position: absolute; left: 0; top: 0; width: 202px; height: 46px; background: #fcf9ff; border-radius: 13px 13px 0 0; }
.tab.active > * { position: relative; color: #1f1f1f; }
.tab > .ring { margin: 0 7px 0 -3px; }
.title { width: 115px; overflow: hidden; white-space: nowrap; font-size: 15.300px; line-height: 22px; letter-spacing: .14px; -webkit-mask-image: linear-gradient(90deg, #000 76%, transparent); mask-image: linear-gradient(90deg, #000 76%, transparent); }
.active .title { margin-left: 2px; }
.x { margin-left: 17px; }
.title.mail { margin-left: 2px; }
.plus { margin: 12px 0 0 11px; }
.is { width: 22px; height: 22px; background: #111; color: #fff; font: 700 19px/22px "Liberation Sans", sans-serif; text-align: center; letter-spacing: -1px; }
.toolbar { height: 61px; flex: none; position: relative; background: #fcf9ff; display: grid; grid-template-columns: 48px 47px 44px 1525px 1fr; align-items: center; padding-left: 21px; border-radius: 12px 12px 0 0; }
.ink { color: #48434f; }
.omnibox { height: 45px; border-radius: 23px; background: #ebe7f2; display: flex; align-items: center; padding-left: 7px; }
.site { width: 32px; height: 32px; border-radius: 50%; background: #fcf9ff; display: grid; place-items: center; margin-right: 10px; }
.url { width: 1393px; font-size: 18px; color: #4a474f; letter-spacing: .4px; }
.url em { font-style: normal; color: #1c1b1f; }
.omnibox > svg:last-child { margin-left: 22px; }
.tools { display: grid; grid-template-columns: 47px 26px 45px 59px 1fr; align-items: center; padding-left: 23px; }
.vsep { width: 2px; height: 21px; background: #e1dafa; }
.me { width: 27px; height: 27px; border-radius: 50%; background: #5c6bc0; color: #fff; font-size: 14px; line-height: 27px; text-align: center; }
.bookmarks { height: 47px; flex: none; position: relative; background: #fcf9ff; border-bottom: 2px solid #e8e5f0; display: grid; align-items: center; padding: 0 0 8px 25px; color: #47424f; font-size: 15.300px; letter-spacing: .24px; white-space: nowrap;
  grid-template-columns: 40px 21px 154px 203px 96px 205px 205px 92px 120px 205px 206px 290px 1fr; }
.bookmarks a { display: flex; align-items: center; gap: 9px; }
.bookmarks .tight { gap: 8px; }
.stripe { width: 22px; height: 22px; border-radius: 4px; background: #635bff; color: #fff; font-size: 17px; line-height: 22px; text-align: center; }
.supa { width: 22px; height: 22px; border-radius: 3px; background: #1c1c1c; display: grid; place-items: center; }
.amazon { width: 21px; height: 22px; background: #fff; border-radius: 3px; color: #000; font-size: 19px; line-height: 15px; text-align: center; }
.amazon svg { margin-left: 2px; }
.ely { width: 20px; height: 20px; background: #1b4470; display: grid; place-items: center; }

/* Project bar */
.builder { height: 64px; flex: none; display: flex; align-items: center; padding-left: 22px; color: #222; font-size: 17px; }
.project { width: 319px; display: grid; grid-template-columns: 34px 110px 35px 36px 49px 1fr; align-items: center; }
.project b { font-weight: 600; }
.grey { color: #999; }
.pair { display: flex; gap: 5px; width: 616px; }
.btn { height: 37px; min-width: 37px; border-radius: 8px; background: #f6f4ed; display: grid; place-items: center; box-shadow: 0 1px 2px rgba(0,0,0,.04); }
.route { width: 333px; height: 42px; border: 1px solid #eceae4; border-radius: 9px; display: flex; align-items: center; padding-left: 13px; }
.route span { margin: 0 10px 0 17px; width: 111px; letter-spacing: .35px; white-space: nowrap; }
.actions { margin-left: 268px; display: flex; gap: 7px; font-weight: 600; }
.toggle { width: 58px; height: 37px; border-radius: 9px; background: #f6f4ed; padding: 2px; }
.toggle i { display: grid; place-items: center; width: 32px; height: 33px; border-radius: 8px; background: #fcfbf8; box-shadow: 0 1px 2px rgba(0,0,0,.08); }
.actions .btn { min-width: 38px; }
.actions .invite { width: 81px; letter-spacing: .3px; }
.actions .publish { width: 95px; background: #1e52f1; color: #fff; letter-spacing: .3px; }

/* Site preview */
.preview { margin-left: 12px; width: 1894px; height: 796px; border-radius: 16px; overflow: hidden; background: #fff; border: 1px solid #ecebe5; border-bottom: 0; display: flex; flex-direction: column; }
.site-head { height: 117px; flex: none; display: flex; align-items: center; padding-left: 48px; }
.site-head strong { width: 163px; margin-left: 19px; font-size: 31px; letter-spacing: -.5px; color: #020617; }
.search { width: 896px; height: 54px; border: 1px solid #d1d5db; border-radius: 27px; display: flex; align-items: center; padding-left: 16px; }
.grey2 { color: #9ca3af; }
.ph { margin-left: 17px; width: 650px; font-size: 18px; color: #64748b; letter-spacing: .14px; }
.search i { width: 2px; height: 44px; background: #dcdee2; margin-right: 22px; }
.all { margin-left: 17px; width: 34px; font-size: 16px; color: #4b5563; }
.go { width: 87px; height: 43px; border-radius: 22px; background: linear-gradient(90deg, #a855f7, #7e22ce); color: #fff; font: 600 16px/43px Inter, sans-serif; text-align: center; letter-spacing: .1px; }
.ai { margin-left: 292px; width: 190px; height: 53px; border-radius: 8px; background: linear-gradient(90deg, #a855f7, #4f46e5); color: #fff; font-size: 18px; font-weight: 500; display: flex; align-items: center; gap: 22px; padding-left: 22px; letter-spacing: .2px; white-space: nowrap; }
.cart { margin-left: 31px; position: relative; }
.cart span { position: absolute; left: 22px; top: -21px; width: 21px; height: 21px; border-radius: 50%; background: #ef4444; color: #fff; font: 600 13px/21px Inter, sans-serif; text-align: center; }
.bell { margin-left: 43px; }
.avatar { margin-left: 28px; width: 43px; height: 43px; border-radius: 50%; background: #f3e8ff; border: 1px solid #e4dcee; color: #6b21a8; font: 500 20px/41px Inter, sans-serif; text-align: center; }
.hero { flex: 1; background: linear-gradient(90deg, #04060a 0%, #05080f 50%, #080c15 100%); display: flex; justify-content: space-between; align-items: flex-start; padding: 0 21px 0 125px; }
.copy { color: #fff; padding-top: 147px; }
h1 { margin: 0 0 30px; font-size: 94px; line-height: 97px; font-weight: 700; letter-spacing: -2.250px; white-space: nowrap; }
.copy p { margin: 0 0 41px; font-size: 26.500px; line-height: 37.400px; color: #f0f0f1; letter-spacing: -.91px; white-space: nowrap; }
.cta { display: flex; gap: 22px; font-size: 24px; font-weight: 500; letter-spacing: -.3px; white-space: nowrap; }
.cta span { height: 59px; display: flex; align-items: center; border-radius: 8px; gap: 22px; }
.primary { width: 261px; padding-left: 43px; background: #9333ea; }
.ghost { width: 299px; padding-left: 43px; border: 2.500px solid #fff; background: #020306; letter-spacing: -.5px; }
.event { width: 396px; height: 112px; background: #f1f3f3; border-radius: 0 0 15px 15px; border-top: 1px solid #e2e4e4; display: flex; align-items: center; padding: 0 22px 16px 21px; color: #8168ae; }
.event div { margin-left: 16px; width: 195px; display: flex; flex-direction: column; white-space: nowrap; }
.event strong { font-size: 26.500px; line-height: 34px; font-weight: 800; letter-spacing: -.35px; }
.event b { font-size: 18px; line-height: 29px; font-weight: 600; color: #111827; letter-spacing: .25px; }
.event small { font-size: 16px; line-height: 20px; color: #6b7280; }
.event span { width: 116px; height: 48px; border: 1px solid #e3daf5; border-radius: 8px; background: #fff; font: 500 16px/46px Inter, sans-serif; text-align: center; letter-spacing: .1px; }

/* Windows and files behind the browser */
.notes { position: absolute; left: 285px; top: 1040px; width: 1008px; height: 52px; border-radius: 0 0 14px 14px; overflow: hidden; display: flex; background: linear-gradient(#999, #999 26px, #b8b8b8 50px); color: #4c4c4c; font-size: 17px; }
.notes-side { width: 295px; border-right: 1px solid #8e8e8e; display: flex; gap: 6px; padding: 23px 0 0 14px; letter-spacing: .1px; }
.notes-list { width: 276px; border-right: 1px solid #8e8e8e; padding-left: 12px; }
.notes-sel { width: 249px; height: 51px; border-radius: 8px; background: #989898; display: flex; gap: 6px; padding: 22px 0 0 35px; font-size: 16px; color: #555; }
.notes-text { margin: 20px 0 0 61px; line-height: 22px; white-space: nowrap; color: #333; font-size: 17px; }
.desk-labels { position: absolute; left: 1432px; top: 1055px; display: grid; grid-template-columns: 162px 195px 100px; font-size: 16px; line-height: 22px; font-weight: 600; color: #c9c6c2; white-space: nowrap; letter-spacing: .1px; }

/* Dock */
.dock { position: absolute; left: 63px; top: 1104px; width: 1794px; height: 89px; border-radius: 28px; border: 1px solid rgba(205,190,170,.55); background: linear-gradient(90deg, #7c6b58, #87725a 40%, #84705a 60%, #78655a 72%, #74665a 88%, #80645a); display: flex; padding: 12px 0 0 2.400px; }
.cell { width: 74.750px; flex: none; position: relative; height: 76px; padding-left: 9.350px; }
.cell > svg { width: 56px; height: 56px; overflow: visible; filter: drop-shadow(0 1px 1px rgba(0,0,0,.3)); }
.run::after { content: ""; position: absolute; left: 34.500px; top: 68px; width: 6px; height: 6px; border-radius: 50%; background: #000; }
.petals rect { mix-blend-mode: multiply; opacity: .92; }
.cell em { position: absolute; left: 49px; top: -7px; width: 26px; height: 26px; border-radius: 50%; background: #f4402f; color: #fff; font: 500 16px/26px Inter, sans-serif; text-align: center; }
.cal { width: 56px; height: 56px; border-radius: 13px; overflow: hidden; background: #fafafa; text-align: center; color: #222; }
.cal span { display: block; height: 18px; background: #fb554e; color: #fff; font-size: 11.500px; line-height: 19px; font-weight: 600; }
.cal b { display: block; font-size: 34px; line-height: 35px; font-weight: 300; letter-spacing: -1px; }
.tv { width: 56px; height: 56px; border-radius: 13px; background: linear-gradient(#29362f, #0a1011); color: #fff; display: flex; align-items: center; justify-content: center; gap: 1px; font-size: 25px; letter-spacing: -.5px; }
.tv svg { margin-bottom: 1px; }
.bar { width: 1px; height: 65px; margin: -1px 15.700px 0 17px; background: #42362e; flex: none; }
.app-letter { fill: #fff; font: 700 15px Inter, sans-serif; text-anchor: middle; }
.cell.mini > svg { width: 21px; height: 21px; margin: 38px 0 0 39px; }
.cell.trash > svg { width: 50px; height: 62px; margin: -3px 0 0 4px; }
```
